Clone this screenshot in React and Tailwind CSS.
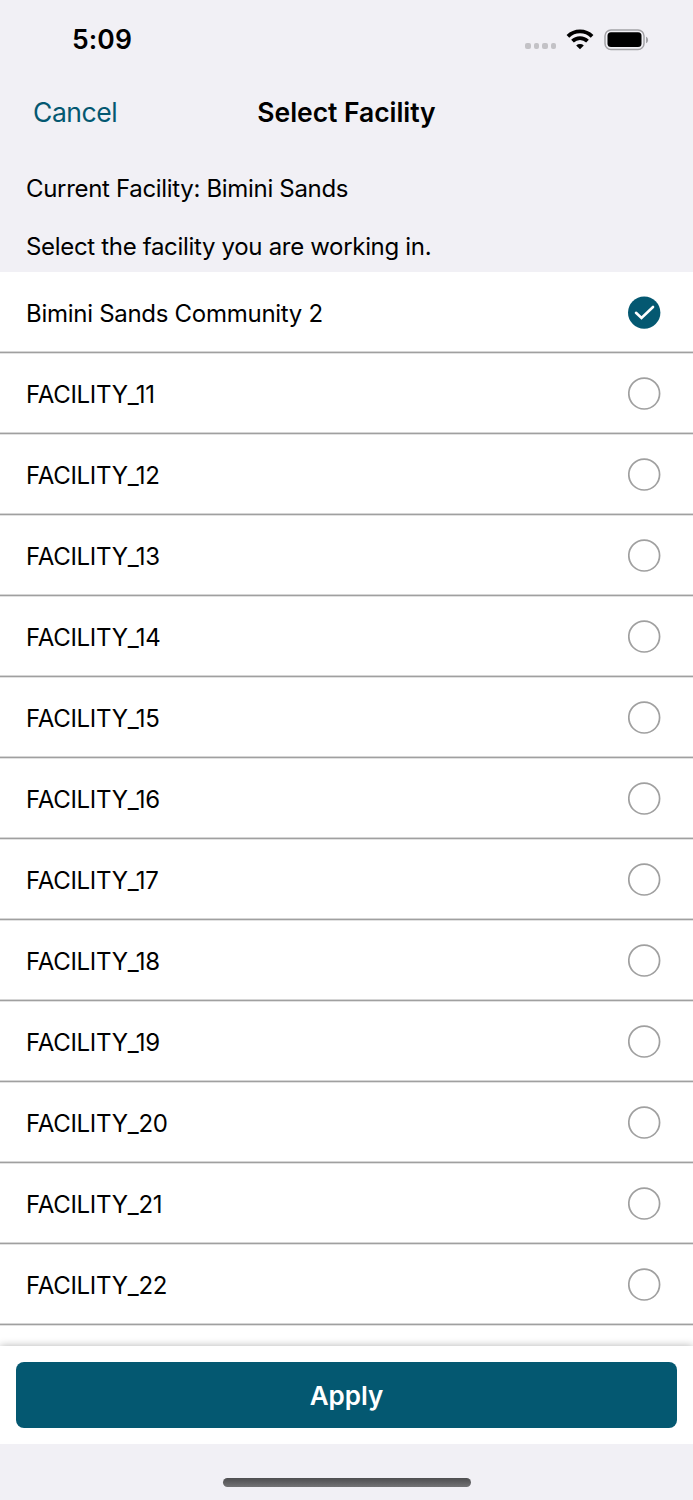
import { useState } from "react";

const FACILITIES = [
  "Bimini Sands Community 2",
  "FACILITY_11",
  "FACILITY_12",
  "FACILITY_13",
  "FACILITY_14",
  "FACILITY_15",
  "FACILITY_16",
  "FACILITY_17",
  "FACILITY_18",
  "FACILITY_19",
  "FACILITY_20",
  "FACILITY_21",
  "FACILITY_22",
];

function StatusBar() {
  return (
    <div className="flex h-[79px] shrink-0 items-center justify-between pl-[72px] pr-[44px]">
      <span className="text-[26.5px] font-semibold leading-none tracking-[0.1px]">5:09</span>
      <div className="flex items-center">
        <div className="mr-[10px] mt-[13px] flex gap-[3px]">
          {[0, 1, 2, 3].map((i) => (
            <span key={i} className="size-[5.5px] rounded-[2px] bg-[#c3c2c6]" />
          ))}
        </div>
        <svg className="mr-[10px] h-[21px] w-[28px]" viewBox="0 0 28 21" fill="none" stroke="#000" strokeWidth="3.800">
          <path d="M1.900 7.400a17.200 17.200 0 0 1 24.200 0" />
          <path d="M6.500 12.200a10.700 10.700 0 0 1 15 0" />
          <path d="M10.200 16.400a5.600 5.600 0 0 1 7.600 0L14 20.300z" fill="#000" stroke="none" />
        </svg>
        <svg className="h-[22px] w-[45px]" viewBox="0 0 45 22">
          <rect x="1" y="1" width="39" height="19.500" rx="6" fill="none" stroke="#a3a2a6" strokeWidth="1.500" />
          <rect x="3.500" y="3.300" width="34" height="14.800" rx="3.500" fill="#000" />
          <path d="M42 7.700c2.800 1 2.800 5.500 0 6.500z" fill="#a3a2a6" />
        </svg>
      </div>
    </div>
  );
}

function FacilityRow({ name, selected, onSelect }) {
  return (
    <button
      onClick={onSelect}
      className="flex h-[81px] w-full shrink-0 items-center justify-between border-b border-[#a0a0a0] pl-[26px] pr-[32px] pt-px text-left shadow-[0_1px_0_#e2e2e2,inset_0_-1px_0_#d6d6d6]"
    >
      <span className="pt-[3px] text-[24px] tracking-[-0.28px]">{name}</span>
      {selected ? (
        <svg className="size-[33px]" viewBox="0 0 33 33" fill="none">
          <circle cx="16.200" cy="16.600" r="16.200" fill="#045871" />
          <path d="M8 16.800l5.500 5.200L25 11" stroke="#fff" strokeWidth="2.600" strokeLinecap="round" />
        </svg>
      ) : (
        <svg className="size-[33px]" viewBox="0 0 33 33" fill="none">
          <circle cx="16.200" cy="16.600" r="15.400" stroke="#a0a0a0" strokeWidth="1.700" />
        </svg>
      )}
    </button>
  );
}

export default function App() {
  const [selected, setSelected] = useState(FACILITIES[0]);

  return (
    <div className="flex h-[1500px] w-[693px] flex-col overflow-hidden bg-[#f1f0f5] font-['Inter',sans-serif] text-black">
      <StatusBar />

      <header className="grid h-[66px] shrink-0 grid-cols-[1fr_auto_1fr] items-center px-[33px] pt-[2px]">
        <button className="justify-self-start text-[26.5px] tracking-[-0.45px] text-[#045871]">Cancel</button>
        <h1 className="text-[26.5px] font-semibold tracking-[-0.05px]">Select Facility</h1>
      </header>

      <div className="flex h-[127px] shrink-0 flex-col gap-[22px] pl-[26px] pt-[26px] text-[24px] leading-9 tracking-[-0.32px]">
        <p>Current Facility: Bimini Sands</p>
        <p>Select the facility you are working in.</p>
      </div>

      <main className="flex h-[1074px] shrink-0 flex-col overflow-hidden bg-white">
        {FACILITIES.map((name) => (
          <FacilityRow
            key={name}
            name={name}
            selected={name === selected}
            onSelect={() => setSelected(name)}
          />
        ))}
      </main>

      <div className="relative h-[98px] shrink-0 bg-white px-4 pt-4 shadow-[0_0_8px_rgba(0,0,0,0.3)]">
        <button className="h-[66px] w-full rounded-lg bg-[#045871] text-[26px] font-semibold text-white">Apply</button>
      </div>

      <footer className="relative flex flex-1 justify-center bg-[#f1f0f5] pt-[34px]">
        <div className="h-[9px] w-[248px] rounded-full bg-linear-to-b from-[#4e4e50] to-[#737375]" />
      </footer>
    </div>
  );
}
